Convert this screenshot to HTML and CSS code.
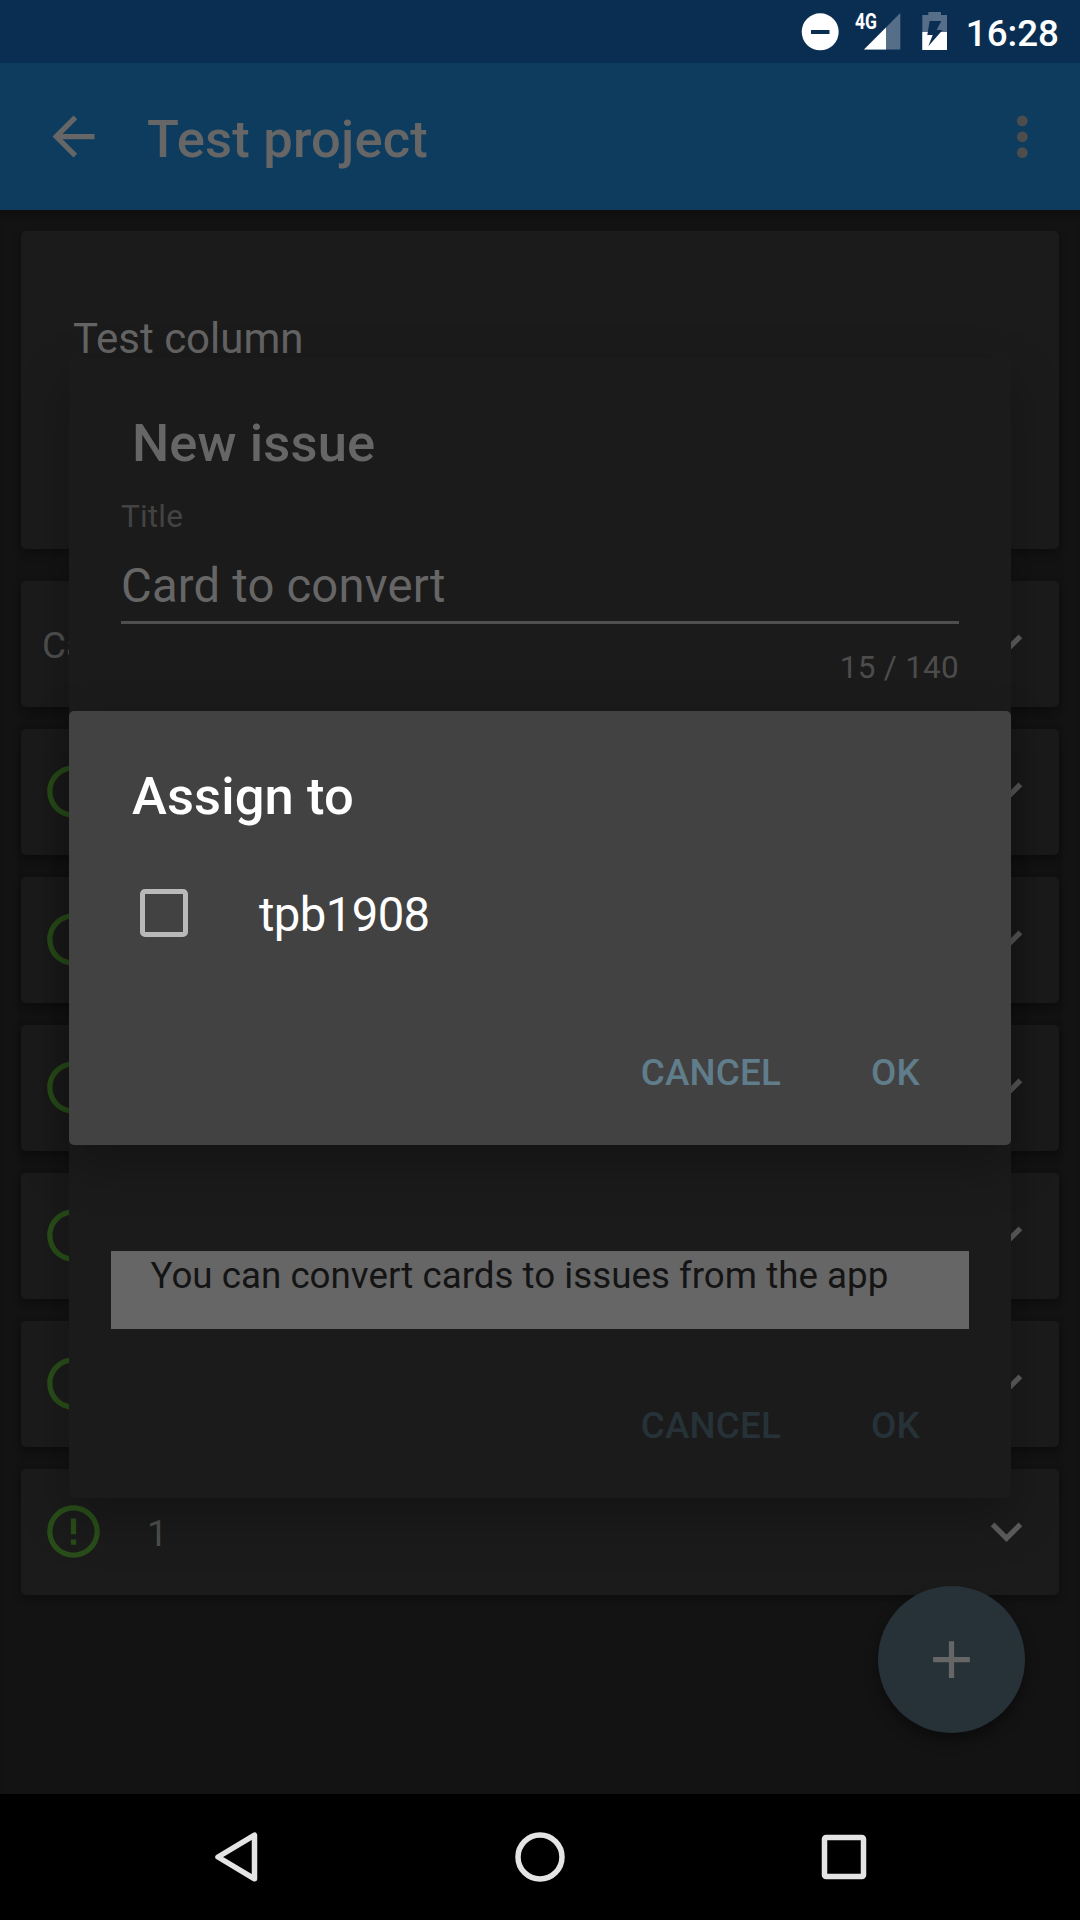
FILE: index.html
```html
<!DOCTYPE html>
<html lang="en">
<head>
<meta charset="utf-8">
<title>Test project</title>
<link rel="stylesheet" href="styles.css">
</head>
<body>
<svg class="sprite" aria-hidden="true">
  <symbol id="expand" viewBox="0 0 24 24"><path d="M16.59 8.59L12 13.17 7.41 8.59 6 10l6 6 6-6z"/></symbol>
  <symbol id="open-issue" viewBox="0 0 24 24"><path d="M11 15h2v2h-2zm0-8h2v6h-2zm.99-5C6.47 2 2 6.48 2 12s4.47 10 9.99 10C17.52 22 22 17.52 22 12S17.52 2 11.99 2zM12 20c-4.42 0-8-3.58-8-8s3.58-8 8-8 8 3.58 8 8-3.58 8-8 8z"/></symbol>
</svg>
<div class="screen">
  <header class="status-bar">
    <svg class="status-icons" viewBox="0 0 160 63">
      <circle cx="20.2" cy="31.8" r="18.5" fill="#fff"/>
      <rect x="11" y="30" width="18.5" height="4" fill="#0a2e52"/>
      <path d="M100.3 13v36.6H64z" fill="#566e88"/>
      <path d="M86 27.4v22.2H64z" fill="#fff"/>
      <text class="network" x="55" y="29" textLength="22" lengthAdjust="spacingAndGlyphs">4G</text>
      <path d="M128.3 12h12.7v3h6v35h-24.7v-35h6z" fill="#566e88"/>
      <path d="M122.3 32h24.7v18h-24.7z" fill="#fff"/>
      <path d="M129.7 21h11.6l-4.7 9h6L128.3 46.3l4.4-11.3h-5.4z" fill="#0a2e52"/>
    </svg>
    <span class="clock">16:28</span>
  </header>
  <div class="app-bar">
    <svg class="icon" viewBox="0 0 24 24"><path d="M20 11H7.83l5.59-5.59L12 4l-8 8 8 8 1.41-1.41L7.83 13H20z"/></svg>
    <h1 class="app-title">Test project</h1>
    <svg class="overflow" viewBox="0 0 12 44"><circle cx="6.3" cy="6" r="5.4"/><circle cx="6.3" cy="21.8" r="5.4"/><circle cx="6.3" cy="37.6" r="5.4"/></svg>
  </div>
  <main class="board">
    <section class="card column-card">Test column</section>
    <article class="card row"><span class="row-text">Ca</span><svg class="chevron"><use href="#expand"/></svg></article>
    <article class="card row"><svg class="issue"><use href="#open-issue"/></svg><svg class="chevron"><use href="#expand"/></svg></article>
    <article class="card row"><svg class="issue"><use href="#open-issue"/></svg><svg class="chevron"><use href="#expand"/></svg></article>
    <article class="card row"><svg class="issue"><use href="#open-issue"/></svg><svg class="chevron"><use href="#expand"/></svg></article>
    <article class="card row"><svg class="issue"><use href="#open-issue"/></svg><svg class="chevron"><use href="#expand"/></svg></article>
    <article class="card row"><svg class="issue"><use href="#open-issue"/></svg><svg class="chevron"><use href="#expand"/></svg></article>
    <article class="card row"><svg class="issue"><use href="#open-issue"/></svg><span class="row-text count">1</span><svg class="chevron"><use href="#expand"/></svg></article>
    <div class="fab"><svg class="icon" viewBox="0 0 24 24"><path d="M19 13h-6v6h-2v-6H5v-2h6V5h2v6h6z"/></svg></div>
  </main>
  <nav class="nav-bar">
    <svg class="nav-icon" viewBox="0 0 60 60"><path d="M48.5 8.2v43.6L12 30z"/></svg>
    <svg class="nav-icon" viewBox="0 0 60 60"><circle cx="30" cy="30" r="22"/></svg>
    <svg class="nav-icon" viewBox="0 0 60 60"><rect x="10.5" y="10.5" width="39" height="39" rx="1.5"/></svg>
  </nav>

  <div class="dialog issue-dialog">
    <h2 class="dialog-title">New issue</h2>
    <div class="field">
      <div class="field-label">Title</div>
      <div class="field-value">Card to convert</div>
      <div class="field-counter">15 / 140</div>
    </div>
    <div class="preview">You can convert cards to issues from the app</div>
    <div class="actions"><span>CANCEL</span><span>OK</span></div>
  </div>

  <div class="dialog assign-dialog">
    <h2 class="dialog-title">Assign to</h2>
    <div class="option"><span class="checkbox"></span><span class="option-label">tpb1908</span></div>
    <div class="actions"><span>CANCEL</span><span>OK</span></div>
  </div>
</div>
</body>
</html>
```
FILE: styles.css
```css
* { box-sizing: border-box; }
body { margin: 0; background: #131313; font-family: Roboto, sans-serif; }
h1, h2 { margin: 0; font-weight: 500; }
svg { display: block; flex: none; }
.sprite { position: absolute; width: 0; height: 0; }

.screen {
  position: relative;
  width: 1080px;
  height: 1920px;
  display: flex;
  flex-direction: column;
  overflow: hidden;
  background: #131313;
}

.status-bar {
  height: 63px;
  display: flex;
  justify-content: flex-end;
  gap: 6px;
  padding-right: 21px;
  background: #0a2e52;
}
.status-icons { width: 160px; height: 63px; }
.network { font: 700 22px Roboto, sans-serif; fill: #fff; }
.clock { font-size: 36.75px; font-weight: 500; line-height: 67px; color: #fff; }

.app-bar {
  height: 147px;
  display: flex;
  align-items: center;
  padding: 0 52px 0 42px;
  background: #0d3c5f;
}
.icon { width: 63px; height: 63px; fill: #666; }
.app-title {
  flex: 1;
  margin-left: 42px;
  padding-top: 5px;
  font-size: 52.5px;
  line-height: 62px;
  letter-spacing: .2px;
  color: #666;
}
.overflow { width: 12px; height: 44px; fill: #4d4d4d; }

.board {
  position: relative;
  flex: 1;
  display: flex;
  flex-direction: column;
  gap: 22px;
  padding: 21px;
  box-shadow: inset 0 12px 12px -8px rgba(0, 0, 0, .3);
}
.card {
  border-radius: 5px;
  background: #1b1b1b;
  box-shadow: 0 4px 8px rgba(0, 0, 0, .3);
}
.column-card {
  height: 318px;
  margin-bottom: 10px;
  padding: 83px 52px 0;
  font-size: 42px;
  line-height: 50px;
  color: #646464;
}
.row {
  height: 126px;
  display: flex;
  align-items: center;
  padding: 0 21px 1px;
}
.issue { width: 63px; height: 63px; fill: #294e19; }
.row-text { padding-top: 4px; font-size: 36.75px; line-height: 44px; color: #4f4f4f; }
.count { margin-left: 42px; }
.chevron { width: 63px; height: 63px; margin-left: auto; fill: #5d5d5d; }

.fab {
  position: absolute;
  right: 55px;
  bottom: 61px;
  width: 147px;
  height: 147px;
  display: flex;
  align-items: center;
  justify-content: center;
  border-radius: 50%;
  background: #263238;
  box-shadow: 0 7px 14px rgba(0, 0, 0, .4);
}

.nav-bar {
  height: 126px;
  display: flex;
  align-items: center;
  justify-content: center;
  gap: 244px;
  background: #000;
}
.nav-icon {
  width: 60px;
  height: 60px;
  fill: none;
  stroke: #e4e4e4;
  stroke-width: 5.5;
  stroke-linejoin: round;
}

.dialog {
  position: absolute;
  left: 69px;
  width: 942px;
  display: flex;
  flex-direction: column;
  padding: 54px 0 50px;
  border-radius: 5px;
}
.dialog-title {
  padding-left: 63px;
  font-size: 52.5px;
  line-height: 62px;
  letter-spacing: .12px;
}
.actions {
  display: flex;
  justify-content: flex-end;
  gap: 90px;
  margin-top: auto;
  padding-right: 91px;
  font-size: 36.75px;
  font-weight: 500;
  line-height: 44px;
  letter-spacing: .2px;
}

.issue-dialog {
  top: 358px;
  height: 1140px;
  background: #1b1b1b;
  color: #666;
  box-shadow: 0 20px 50px rgba(0, 0, 0, .27);
}
.issue-dialog .actions { color: #263238; }
.field { padding: 0 52px; }
.field-label {
  margin-top: 24px;
  font-size: 31.5px;
  line-height: 38px;
  letter-spacing: .2px;
  color: #434343;
}
.field-value {
  margin-top: 22px;
  padding-bottom: 7px;
  border-bottom: 3px solid #4f4f4f;
  font-size: 47.25px;
  line-height: 56px;
  letter-spacing: .17px;
}
.field-counter {
  margin-top: 25px;
  font-size: 31.5px;
  line-height: 38px;
  letter-spacing: .25px;
  text-align: right;
  color: #4c4c4c;
}
.preview {
  height: 78px;
  margin: 564px 42px 0;
  padding: 3px 39.5px 0;
  background: #666;
  font-size: 36.75px;
  line-height: 44px;
  white-space: nowrap;
  color: #141414;
}

.assign-dialog {
  top: 711px;
  height: 434px;
  background: #424242;
  color: #fff;
  box-shadow: 0 20px 50px rgba(0, 0, 0, .27);
}
.assign-dialog .actions { color: #607d8b; }
.option {
  display: flex;
  align-items: center;
  gap: 71px;
  margin-top: 60px;
  padding-left: 71px;
  font-size: 47.25px;
  line-height: 56px;
}
.option-label { letter-spacing: -.6px; }
.checkbox {
  width: 48px;
  height: 48px;
  margin-top: -4px;
  border: 5.5px solid #b9b9b9;
  border-radius: 5px;
}
```
